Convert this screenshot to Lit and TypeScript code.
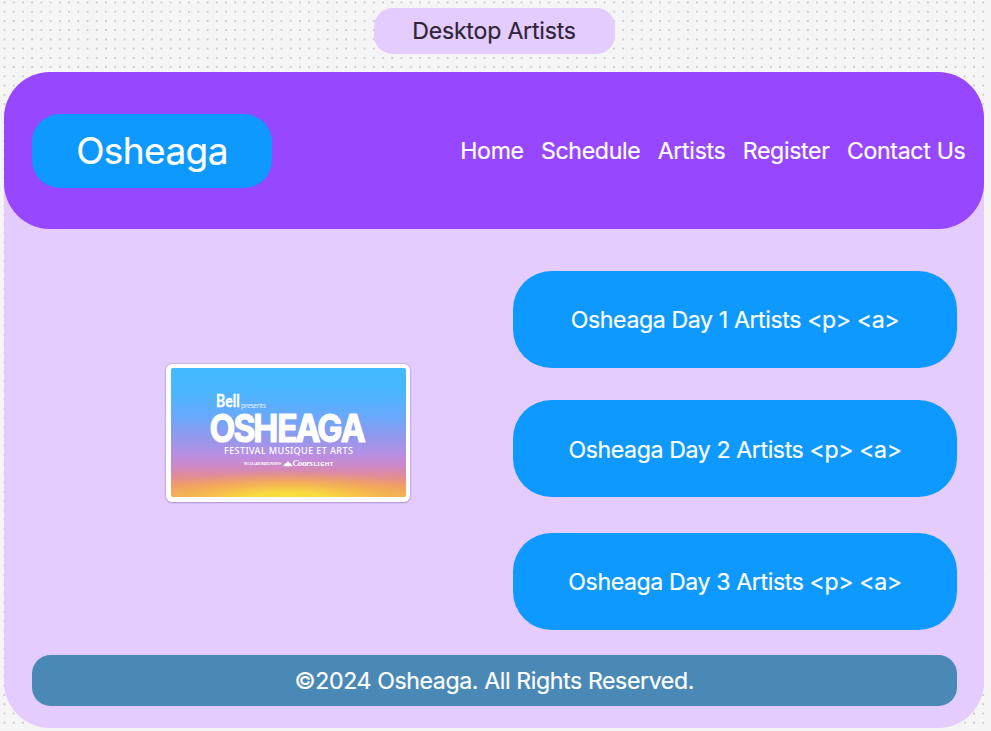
import { LitElement, html, css, svg } from "lit";
import { customElement } from "lit/decorators.js";

@customElement("festival-card")
export class FestivalCard extends LitElement {
  static styles = css`
    :host { display: block; }
    .frame {
      display: flex;
      box-sizing: border-box;
      justify-content: center;
      width: 244px;
      height: 138px;
      padding-top: 4px;
      border-radius: 6px;
      background: #fff;
      box-shadow: 0 0 2px rgba(70, 30, 120, 0.45), 0 1px 2px rgba(70, 30, 120, 0.2);
    }
    svg { display: block; width: 235px; height: 129px; border-radius: 2px; -webkit-text-stroke: 0; }
    .brand { font-family: Lato, sans-serif; fill: #fff; }
    .title { font-family: Inter, sans-serif; fill: #fff; stroke: #fff; stroke-linejoin: round; }
    .line { font-family: "Noto Sans", sans-serif; fill: #fff; }
    .script { font-family: "Liberation Serif", serif; font-style: italic; font-weight: 700; fill: #fff; }
  `;

  render() {
    return html`<div class="frame">
      <svg viewBox="0 0 235 129">
        ${svg`
        <defs>
          <linearGradient id="sky" x1="0" y1="0" x2="0" y2="1">
            <stop offset="0" stop-color="#43baff"/>
            <stop offset="0.18" stop-color="#49b6ff"/>
            <stop offset="0.37" stop-color="#68a9fb"/>
            <stop offset="0.53" stop-color="#9099ee"/>
            <stop offset="0.68" stop-color="#ba8ee2"/>
            <stop offset="0.76" stop-color="#cd89c6"/>
            <stop offset="0.84" stop-color="#e38c96"/>
            <stop offset="0.91" stop-color="#f09c68"/>
            <stop offset="1" stop-color="#f4b452"/>
          </linearGradient>
          <radialGradient id="sun" gradientUnits="userSpaceOnUse" cx="0" cy="0" r="1"
            gradientTransform="translate(117.5 134) scale(150 32)">
            <stop offset="0" stop-color="#fae83a"/>
            <stop offset="0.3" stop-color="#fae13c" stop-opacity=".9"/>
            <stop offset="0.65" stop-color="#f7bd48" stop-opacity=".5"/>
            <stop offset="1" stop-color="#f3a060" stop-opacity="0"/>
          </radialGradient>
        </defs>
        <rect width="235" height="129" fill="url(#sky)"/>
        <rect width="235" height="129" fill="url(#sun)"/>
        <text class="brand" transform="scale(.82 1)" x="55" y="39.5" font-size="17" font-weight="700" stroke="#fff" stroke-width=".4" textLength="28.5" lengthAdjust="spacing">Bell</text>
        <text class="line" x="70" y="39.5" font-size="6.3" opacity=".8" textLength="24.5" lengthAdjust="spacingAndGlyphs">presents</text>
        <text class="title" transform="scale(.87 1)" x="44.2 71.8 94.6 122.2 143 168.2 195" y="73.6" font-size="38.5" font-weight="700" stroke-width="1.2">OSHEAGA</text>
        <text class="line" x="53" y="85.6" font-size="9.1" font-weight="500" textLength="128.5" lengthAdjust="spacing">FESTIVAL MUSIQUE ET ARTS</text>
        <text class="line" x="73" y="97" font-size="3.2" font-weight="500" textLength="37" lengthAdjust="spacingAndGlyphs">IN COLLABORATION WITH</text>
        <path d="M112 98.3 L115 94.8 L115.8 95 L117 93 L118.4 95 L119.2 94.8 L121.5 98.3Z" fill="#fff"/>
        <text class="script" x="121.5" y="98.2" font-size="8.5" textLength="20" lengthAdjust="spacingAndGlyphs">Coors</text>
        <text class="line" x="142.5" y="98" font-size="6" font-weight="700" textLength="19.3" lengthAdjust="spacing">LIGHT</text>
        `}
      </svg>
    </div>`;
  }
}

@customElement("app-root")
export class AppRoot extends LitElement {
  static styles = css`
    :host {
      display: flex;
      flex-direction: column;
      align-items: center;
      box-sizing: border-box;
      width: 991px;
      height: 731px;
      padding: 7.5px 7px 0 4px;
      overflow: hidden;
      font-family: Inter, sans-serif;
      font-size: 23.1px;
      line-height: 28px;
      letter-spacing: -0.38px;
      -webkit-text-stroke: 0.2px currentColor;
      color: #fff;
      background-color: #f5f5f5;
      background-image: radial-gradient(circle at 50% 50%, #a0a0a0 0.5px, transparent 0.8px);
      background-size: 9.246px 9.246px;
      background-position: -0.2px -2.2px;
    }
    .label, .logo, .day, .footer { display: flex; align-items: center; justify-content: center; white-space: nowrap; }
    .label { width: 241px; height: 46px; border-radius: 18.5px; background: #e4ccff; color: #2f2438; letter-spacing: -0.2px; }
    .page {
      display: flex;
      flex-direction: column;
      width: 980px;
      height: 656px;
      margin-top: 18.5px;
      border-radius: 46px;
      background: #e4ccff;
    }
    .header {
      display: flex;
      align-items: center;
      justify-content: space-between;
      box-sizing: border-box;
      height: 157px;
      padding: 0 18.5px 0 28px;
      border-radius: 46px;
      background: #9747ff;
    }
    .logo { width: 240px; height: 74px; border-radius: 28px; background: #0d99ff; font-size: 37px; letter-spacing: -0.6px; }
    .nav { display: flex; gap: 17.2px; padding-top: 1px; letter-spacing: -0.3px; }
    .content { display: grid; grid-template-columns: 509px 444px; height: 426px; }
    .art { display: flex; justify-content: center; padding: 135px 0 0 59px; }
    .days { display: flex; flex-direction: column; padding-top: 42px; gap: 32px; }
    .day { height: 97px; border-radius: 38.5px; background: #0d99ff; }
    .day:last-child { margin-top: 4px; }
    .day span { padding-top: 1px; }
    .day:nth-child(2) span { padding-top: 2px; }
    .footer { height: 50.5px; margin: 0 27.5px 0 28px; border-radius: 18.5px; background: #4a89b6; }
    .footer span { padding-top: 2px; }
  `;

  private links = ["Home", "Schedule", "Artists", "Register", "Contact Us"];

  render() {
    return html`
      <div class="label">Desktop Artists</div>
      <div class="page">
        <header class="header">
          <div class="logo">Osheaga</div>
          <nav class="nav">${this.links.map((l) => html`<span>${l}</span>`)}</nav>
        </header>
        <main class="content">
          <div class="art"><festival-card></festival-card></div>
          <div class="days">
            ${[1, 2, 3].map((n) => html`<div class="day"><span>Osheaga Day ${n} Artists &lt;p&gt; &lt;a&gt;</span></div>`)}
          </div>
        </main>
        <footer class="footer"><span>©2024 Osheaga. All Rights Reserved.</span></footer>
      </div>
    `;
  }
}
